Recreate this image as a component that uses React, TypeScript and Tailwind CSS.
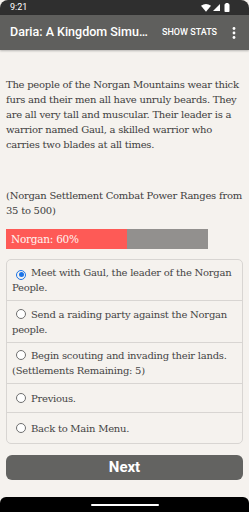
import React from "react";

const serif = { fontFamily: '"DejaVu Serif", serif' } as const;

function Radio({ checked }: { checked?: boolean }) {
  return checked ? (
    <span className="inline-flex items-center justify-center w-[10px] h-[10px] rounded-full border-[1.5px] border-[#1a73e8] ml-[4px] mr-[5px] align-[-1px]">
      <span className="w-[5px] h-[5px] rounded-full bg-[#1a73e8]" />
    </span>
  ) : (
    <span className="inline-block w-[10px] h-[10px] rounded-full border border-[#6f6f6f] bg-white ml-[4px] mr-[5px] align-[-1px]" />
  );
}

export default function App() {
  const options: { lines: React.ReactNode; h: string; checked?: boolean }[] = [
    { lines: <>Meet with Gaul, the leader of the Norgan<br />People.</>, h: "h-[41px]", checked: true },
    { lines: <>Send a raiding party against the Norgan<br />people.</>, h: "h-[42px]" },
    { lines: <>Begin scouting and invading their lands.<br />(Settlements Remaining: 5)</>, h: "h-[41px]" },
    { lines: <>Previous.</>, h: "h-[29px]" },
    { lines: <>Back to Main Menu.</>, h: "h-[30px]" },
  ];
  return (
    <div className="w-[249px] h-[512px] bg-[#f5f2ee] flex flex-col overflow-hidden" style={{ fontFamily: "Roboto, sans-serif" }}>
      {/* status bar */}
      <div className="h-[15px] bg-[#2f2f2f] rounded-t-[8px] flex items-center justify-between pl-[10px] pr-[19px] text-white">
        <span className="text-[9px] leading-none">9:21</span>
        <div className="flex items-center gap-[2px]">
          <svg width="10" height="8" viewBox="0 0 10 8">
            <path d="M0 1.8 Q5 -1.6 10 1.8 L5 7.8 Z" fill="#fff" />
          </svg>
          <svg width="7" height="7" viewBox="0 0 7 7">
            <path d="M7 0 L7 7 L0 7 Z" fill="#fff" />
          </svg>
          <svg width="6" height="9" viewBox="0 0 6 9" className="ml-[2px]">
            <rect x="1.5" y="0" width="3" height="1.2" fill="#fff" />
            <rect x="0.5" y="1" width="5" height="8" rx="0.8" fill="#fff" />
          </svg>
        </div>
      </div>
      {/* app bar */}
      <div className="h-[35px] bg-[#5f5f5d] flex items-center justify-between pl-[10px] pr-[13px] text-white shadow-[0_1px_2px_rgba(0,0,0,0.25)] relative z-10">
        <span className="text-[12.5px] font-medium whitespace-nowrap shrink-0">Daria: A Kingdom Simu…</span>
        <div className="flex items-center shrink-0">
          <span className="text-[9px] font-medium whitespace-nowrap mr-[15px]">SHOW STATS</span>
          <svg width="4" height="12" viewBox="0 0 4 12">
            <circle cx="2" cy="1.5" r="1.4" fill="#fff" />
            <circle cx="2" cy="6" r="1.4" fill="#fff" />
            <circle cx="2" cy="10.5" r="1.4" fill="#fff" />
          </svg>
        </div>
      </div>
      {/* content */}
      <div className="flex-1 flex flex-col px-[6px] text-[#404040] text-[10px] leading-[15px] tracking-[-0.25px]" style={serif}>
        <p className="pt-[27px] whitespace-nowrap">
          The people of the Norgan Mountains wear thick<br />
          furs and their men all have unruly beards. They<br />
          are all very tall and muscular. Their leader is a<br />
          warrior named Gaul, a skilled warrior who<br />
          carries two blades at all times.
        </p>
        <p className="mt-[36px] whitespace-nowrap">
          (Norgan Settlement Combat Power Ranges from<br />
          35 to 500)
        </p>
        <div className="mt-[11px] w-[202px] h-[20px] bg-[#92908e] flex">
          <div className="h-full bg-[#fe5a56] flex items-center pl-[5px] text-[#fff3ee] text-[10.5px]" style={{ width: "60%" }}>
            Norgan: 60%
          </div>
        </div>
        <div className="mt-[10px] border border-[#d8d5d2] rounded-[5px] flex flex-col">
          {options.map((o, i) => (
            <div
              key={i}
              className={`${o.h} flex items-center pl-[5px] text-[#454545] whitespace-nowrap ${i < options.length - 1 ? "border-b border-[#d8d5d2]" : ""}`}
            >
              <div>
                <Radio checked={o.checked} />
                {o.lines}
              </div>
            </div>
          ))}
        </div>
        <button className="mt-[11px] h-[25px] w-full rounded-[6px] bg-[#636361] text-white text-[15px] font-bold flex items-center justify-center" style={{ fontFamily: "Roboto, sans-serif", letterSpacing: 0 }}>
          Next
        </button>
      </div>
      {/* nav bar */}
      <div className="h-[15px] bg-black rounded-t-[6px] flex items-center justify-center">
        <div className="w-[68px] h-[2px] rounded-full bg-white" />
      </div>
    </div>
  );
}
